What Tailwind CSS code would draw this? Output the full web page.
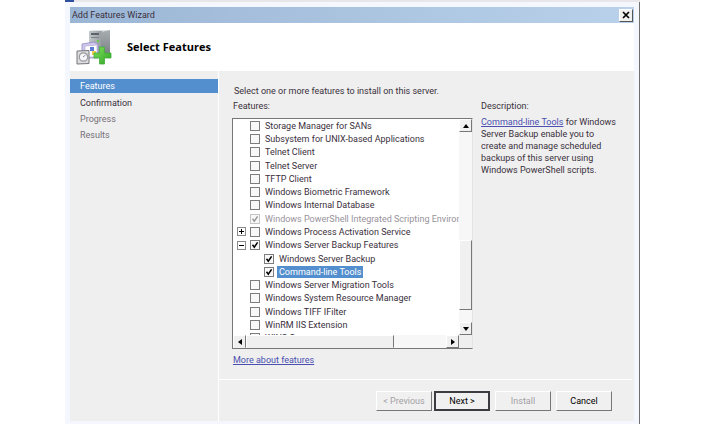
<!DOCTYPE html>
<html lang="en">
<head>
    <meta charset="UTF-8">
    <meta name="viewport" content="width=device-width, initial-scale=1.0">
    <title>Add Features Wizard</title>
    <script src="https://cdn.jsdelivr.net/npm/@tailwindcss/browser@4"></script>
</head>
<body class="bg-white font-['Roboto',sans-serif] text-[9px] leading-3 text-[#3a2f3c]">
<div class="ml-[65px] mr-[73px] flex h-screen flex-col overflow-hidden">
    <!-- edge of the window behind the dialog -->
    <div class="h-[2px] shrink-0 bg-[#e9e6ea]"><div class="h-full w-[9px] bg-[#2f4fa0]"></div></div>

    <div class="flex min-h-0 flex-1 flex-col border-r border-[#6f6f6f] bg-[#f4f7fd] px-[5px] pt-[5px] pb-[3px]">
        <header class="flex h-4 shrink-0 items-center justify-between bg-linear-to-r from-[#9bb6d5] to-[#b9d1ea] pr-px pl-[2px]">
            <h1>Add Features Wizard</h1>
            <button type="button" aria-label="Close" class="flex h-[13px] w-[14px] items-center justify-center border border-t-white border-r-[#555] border-b-[#555] border-l-white bg-[#f0f0f0]">
                <svg class="h-2 w-2" viewBox="0 0 8 8" fill="none" stroke="#000" stroke-width="1.7"><path d="M1 1l6 6M7 1L1 7"/></svg>
            </button>
        </header>

        <div class="flex h-12 shrink-0 items-center gap-[15px] bg-white pl-[6px]">
            <svg class="h-9 w-9" viewBox="0 0 36 36">
                <defs>
                    <linearGradient id="tower" x1="0" x2="1"><stop offset="0" stop-color="#c3c8ca"/><stop offset="1" stop-color="#959b9f"/></linearGradient>
                    <linearGradient id="side" x1="0" y1="0" x2="0" y2="1"><stop offset="0" stop-color="#a9aeb1"/><stop offset="1" stop-color="#767d82"/></linearGradient>
                    <linearGradient id="plus" x1="0" y1="0" x2="1" y2="1"><stop offset="0" stop-color="#7fe05a"/><stop offset="1" stop-color="#2fa428"/></linearGradient>
                </defs>
                <path d="M13 2l4-1h17l-8 2z" fill="#dfe2e3"/>
                <path d="M13 2h13v25H13z" fill="url(#tower)"/>
                <path d="M25 3l9-2v24l-9 2z" fill="url(#side)"/>
                <path d="M15 4h8v2h-8z" fill="#5b646a"/>
                <path d="M15 8h8v1h-8z" fill="#7b8389"/>
                <path d="M21 11h2v2h-2z" fill="#5fcf4a"/>
                <path d="M6 15l12-2 4 2v14H6z" fill="#cfc8ec" stroke="#9289c0" stroke-width=".8"/>
                <path d="M9 17l12-1v12H9z" fill="#fff" stroke="#a9a2cf" stroke-width=".6"/>
                <path d="M14 18h4v4h-4z" fill="#5b7bd3"/>
                <path d="M16 22h4v4h-4z" fill="#f0ca4c"/>
                <path d="M1 22l12-.5V34.500L1 35z" fill="#dcdcde" stroke="#77777c"/>
                <circle cx="7.500" cy="28" r="4.200" fill="#f6f6f8" stroke="#9a9aa1" stroke-width="1.200"/>
                <path d="M7 28l2.500-2" stroke="#8c8fa5"/>
                <path d="M23.500 18h5v6h6.500v5h-6.500v6h-5v-6H18v-5h5.500z" fill="url(#plus)" stroke="#43ac38" stroke-width=".8"/>
            </svg>
            <h2 class="font-['Open_Sans',sans-serif] text-[11px] leading-4 font-bold text-black">Select Features</h2>
        </div>

        <div class="flex min-h-0 flex-1 bg-[#efefef]">
            <nav class="flex w-[149px] shrink-0 flex-col border-r border-white pt-2">
                <a href="#" aria-current="step" class="mb-[2px] bg-[#538fce] px-[10px] py-px text-white">Features</a>
                <a href="#" class="px-[10px] py-[2px]">Confirmation</a>
                <a href="#" class="px-[10px] py-[2px] text-[#776f79]">Progress</a>
                <a href="#" class="px-[10px] py-[2px] text-[#776f79]">Results</a>
            </nav>

            <main class="flex min-w-0 flex-1 flex-col">
                <div class="flex flex-1 flex-col pt-[14px] pl-[13px]">
                    <p class="pl-[2px]">Select one or more features to install on this server.</p>
                    <div class="mt-[3px] flex gap-2">
                        <section class="min-w-0 flex-1">
                            <h3 id="features-label" class="pl-px">Features:</h3>
                            <div class="mt-[6px] grid grid-cols-[1fr_13px] grid-rows-[216px_13px] border border-t-[#777] border-r-[#e4e4e4] border-b-[#777] border-l-[#777] bg-white">
                                <div class="overflow-hidden">
                                    <ul id="features" aria-labelledby="features-label" class="grid h-[226px] auto-rows-fr"></ul>
                                </div>

                                <!-- vertical scrollbar -->
                                <div class="flex flex-col bg-[#f7f7f7]">
                                    <button type="button" aria-label="Scroll up" class="flex h-[13px] items-center justify-center border border-t-white border-r-[#777] border-b-[#777] border-l-white bg-[#f0f0f0]">
                                        <svg class="h-1 w-[6px]" viewBox="0 0 6 4"><path d="M0 4l3-4 3 4z"/></svg>
                                    </button>
                                    <div class="mt-[108px] h-[70px] border border-t-white border-r-[#777] border-b-[#777] border-l-white bg-[#f0f0f0]"></div>
                                    <button type="button" aria-label="Scroll down" class="mt-auto flex h-[13px] items-center justify-center border border-t-white border-r-[#777] border-b-[#777] border-l-white bg-[#f0f0f0]">
                                        <svg class="h-1 w-[6px]" viewBox="0 0 6 4"><path d="M0 0h6L3 4z"/></svg>
                                    </button>
                                </div>

                                <!-- horizontal scrollbar -->
                                <div class="flex bg-[#f7f7f7]">
                                    <button type="button" aria-label="Scroll left" class="flex w-[13px] items-center justify-center border border-t-white border-r-[#777] border-b-[#f0f0f0] border-l-white bg-[#f0f0f0]">
                                        <svg class="h-[6px] w-1" viewBox="0 0 4 6"><path d="M4 0v6L0 3z"/></svg>
                                    </button>
                                    <div class="w-[148px] border border-t-white border-r-[#777] border-b-[#f0f0f0] border-l-white bg-[#f0f0f0]"></div>
                                    <button type="button" aria-label="Scroll right" class="ml-auto flex w-[13px] items-center justify-center border border-t-white border-r-[#777] border-b-[#777] border-l-white bg-[#f0f0f0]">
                                        <svg class="h-[6px] w-1" viewBox="0 0 4 6"><path d="M0 0l4 3-4 3z"/></svg>
                                    </button>
                                </div>
                                <div class="bg-[#efefef]"></div>
                            </div>
                            <a href="#" class="mt-[5px] ml-px inline-block text-[#4a4fb0] underline">More about features</a>
                        </section>

                        <section class="w-[153px] shrink-0">
                            <h3>Description:</h3>
                            <p class="mt-1 max-w-[138px]"><a href="#" class="text-[#4a4fb0] underline">Command-line Tools</a> for Windows Server Backup enable you to create and manage scheduled backups of this server using Windows PowerShell scripts.</p>
                        </section>
                    </div>
                </div>

                <footer class="mr-[2px] flex justify-end gap-[5px] border-t border-white pt-[11px] pr-5 pb-[10px]">
                    <div class="flex gap-[2px]">
                        <button type="button" disabled class="h-5 w-14 border border-t-white border-r-[#777] border-b-[#777] border-l-white bg-[#f0f0f0] text-[#a3a0a5]">&lt; Previous</button>
                        <button type="button" class="h-5 w-14 border-2 border-[#3c3c40] bg-[#f0f0f0] text-black">Next &gt;</button>
                    </div>
                    <button type="button" disabled class="h-5 w-14 border border-t-white border-r-[#777] border-b-[#777] border-l-white bg-[#f0f0f0] text-[#a3a0a5]">Install</button>
                    <button type="button" class="h-5 w-14 border border-t-white border-r-[#777] border-b-[#777] border-l-white bg-[#f0f0f0] text-black">Cancel</button>
                </footer>
            </main>
        </div>
    </div>
</div>

<script>
    const features = [
        { name: 'Storage Manager for SANs' },
        { name: 'Subsystem for UNIX-based Applications' },
        { name: 'Telnet Client' },
        { name: 'Telnet Server' },
        { name: 'TFTP Client' },
        { name: 'Windows Biometric Framework' },
        { name: 'Windows Internal Database' },
        { name: 'Windows PowerShell Integrated Scripting Environment (ISE)', checked: true, disabled: true },
        { name: 'Windows Process Activation Service', toggle: '+' },
        { name: 'Windows Server Backup Features', toggle: '-', checked: true },
        { name: 'Windows Server Backup', child: true, checked: true },
        { name: 'Command-line Tools', child: true, checked: true, selected: true },
        { name: 'Windows Server Migration Tools' },
        { name: 'Windows System Resource Manager' },
        { name: 'Windows TIFF IFilter' },
        { name: 'WinRM IIS Extension' },
        { name: 'WINS Server' }
    ];

    // + / - box in front of a feature that has children
    function toggleBox(sign) {
        if (!sign) return '<span class="w-[7px] shrink-0"></span>';
        const path = sign === '+' ? 'M1 3.5h5M3.5 1v5' : 'M1 3.5h5';
        return `<button type="button" aria-label="Toggle" class="h-[7px] w-[7px] shrink-0 outline outline-[#8a8a8a]">
            <svg class="block h-[7px] w-[7px]" viewBox="0 0 7 7" stroke="#000"><path d="${path}"/></svg>
        </button>`;
    }

    document.getElementById('features').innerHTML = features.map((f, i) => `
        <li class="flex items-center gap-[5px] pl-[5px] whitespace-nowrap">
            ${toggleBox(f.toggle)}
            <div class="flex items-center ${f.child ? 'ml-[14px]' : ''}">
                <span class="relative h-[10px] w-[10px] shrink-0">
                    <input type="checkbox" id="feature-${i}" ${f.checked ? 'checked' : ''} ${f.disabled ? 'disabled' : ''}
                        class="peer block h-[10px] w-[10px] appearance-none border border-[#7d7d7d] bg-[#f8f8f8] disabled:border-[#c4c4c4]">
                    <svg class="pointer-events-none absolute inset-0 hidden h-[10px] w-[10px] text-black peer-checked:block peer-disabled:text-[#9a9a9a]"
                        viewBox="0 0 10 10" fill="none" stroke="currentColor" stroke-width="1.5"><path d="M2.500 4.800l1.800 2.400L7.600 2.300"/></svg>
                </span>
                <label for="feature-${i}" class="ml-[3px] px-[2px] ${f.selected ? 'bg-[#538fce] text-white' : ''} ${f.disabled ? 'text-[#97929a]' : ''}">${f.name}</label>
            </div>
        </li>`).join('');
</script>
</body>
</html>
